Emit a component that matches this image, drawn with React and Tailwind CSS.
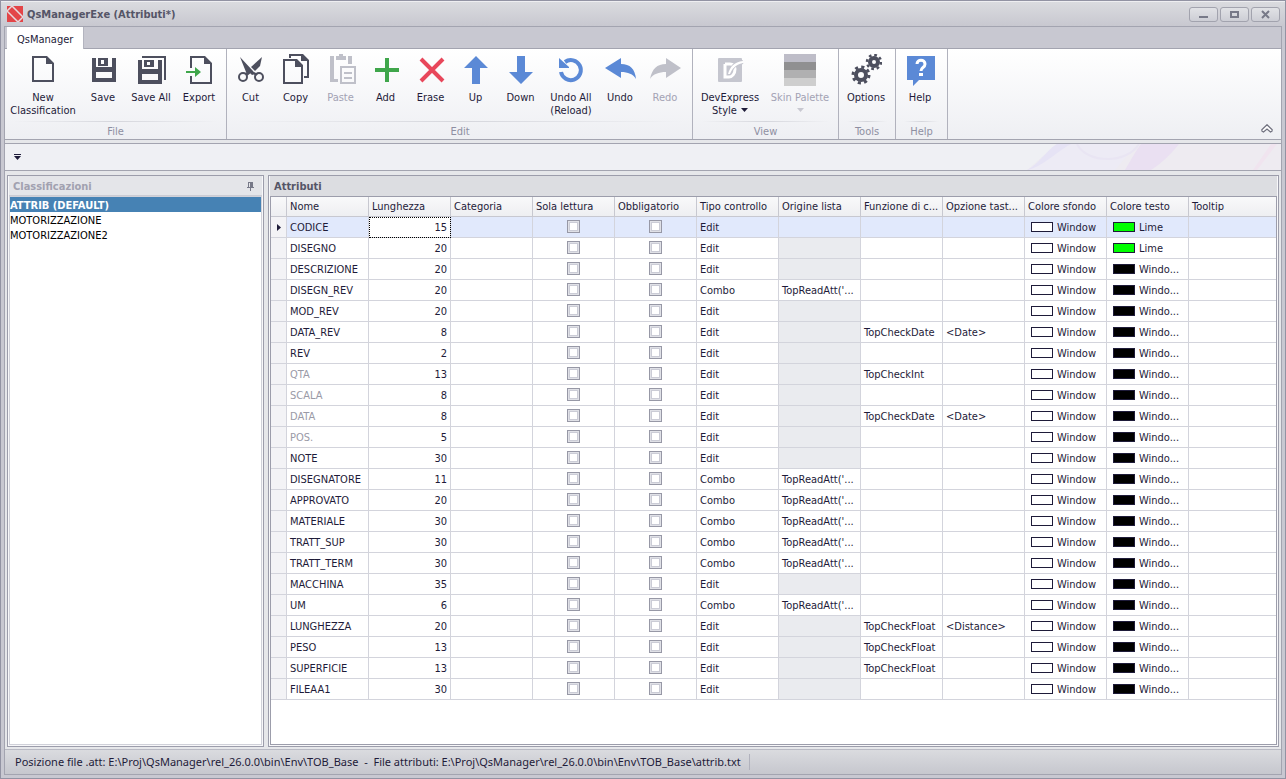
import { useState } from "react";

const DARK = "#4d4f5e";

const NewIcon = () => (
  <svg className="w-8 h-8" viewBox="0 0 32 32" fill={DARK} fillRule="evenodd">
    <path d="M5 2h15l7 7v19H5zM7 4v22h18V10h-6V4z" />
  </svg>
);

const SaveIcon = () => (
  <svg className="w-8 h-8" viewBox="0 0 32 32" fill={DARK} fillRule="evenodd">
    <path d="M5 4h4v9h16V4h4v24H5zM9 18v6h16v-6z" />
    <path d="M11 4h10v8H11zM14 6v4h3V6z" />
  </svg>
);

const SaveAllIcon = () => (
  <svg className="w-8 h-8" viewBox="0 0 32 32" fill={DARK} fillRule="evenodd">
    <path d="M3 6h4v9h16V6h4v24H3zM7 20v6h16v-6z" />
    <path d="M9 6h10v7H9zM12 8v3h3V8z" />
    <path d="M7 2h24v24h-2V4H7z" />
  </svg>
);

const ExportIcon = () => (
  <svg className="w-8 h-8" viewBox="0 0 32 32" fill={DARK}>
    <path d="M7 2h15l7 7v21H7v-8h2v6h18V10h-6V4H9v10H7z" />
    <path d="M3 17h9v-4l6 5-6 5v-4H3z" fill="#3fa64b" />
  </svg>
);

const CutIcon = () => (
  <svg className="w-8 h-8" viewBox="0 0 32 32" fill={DARK}>
    <path d="M5 3l13 14 2 3-3 1-2-2-4-1z" />
    <path d="M27 3l-2 9-5 5-4-4z" />
    <circle cx="8" cy="23" r="4" fill="none" stroke={DARK} strokeWidth="2" />
    <circle cx="24" cy="23" r="4" fill="none" stroke={DARK} strokeWidth="2" />
    <path d="M10 19l5-3 2 2-5 4zM19 18l4 2-2 2-4-3z" />
  </svg>
);

const CopyIcon = () => (
  <svg className="w-8 h-8" viewBox="0 0 32 32" fill={DARK} fillRule="evenodd">
    <path d="M3 5h14l6 6v19H3zM5 7v21h16V13h-6V7z" />
    <path d="M9 0h14l6 6v18h-5v-2h3V7h-6V2H11v2H9z" />
  </svg>
);

const PasteIcon = () => (
  <svg className="w-8 h-8" viewBox="0 0 32 32" fill="#bfc0c9" fillRule="evenodd">
    <path d="M5 2h4v23h4v3H5zM23 2h4v8h-4zM11 2h3V0h4v2h3v4H11z" />
    <path d="M15 12h16v18H15zM17 14v14h12V14z" />
    <path d="M19 18h8v2h-8zM19 23h8v2h-8z" />
  </svg>
);

const AddIcon = () => (
  <svg className="w-8 h-8" viewBox="0 0 32 32" fill="#3fa64b">
    <path d="M15 4h4v10h10v4H19v10h-4V18H5v-4h10z" />
  </svg>
);

const EraseIcon = () => (
  <svg className="w-8 h-8" viewBox="0 0 32 32" fill="none" stroke="#e8475b" strokeWidth="4">
    <path d="M6 5l22 22M28 5L6 27" />
  </svg>
);

const UpIcon = () => (
  <svg className="w-8 h-8" viewBox="0 0 32 32" fill="#5b89d6">
    <path d="M16 2l12 12h-8v16h-8V14H4z" />
  </svg>
);

const DownIcon = () => (
  <svg className="w-8 h-8" viewBox="0 0 32 32" fill="#5b89d6">
    <path d="M12 2h8v16h8L16 30 4 18h8z" />
  </svg>
);

const UndoAllIcon = () => (
  <svg className="w-8 h-8" viewBox="0 0 32 32">
    <path d="M6 18a10 10 0 1 0 4-10" fill="none" stroke="#5b89d6" strokeWidth="4" />
    <path d="M4 4l10 9v1H4z" fill="#5b89d6" />
  </svg>
);

const UndoIcon = () => (
  <svg className="w-8 h-8" viewBox="0 0 32 32" fill="#5b89d6">
    <path d="M1 14L17 4v6c9 0 14 5 15 15C29 20 24 18 17 18v6z" />
  </svg>
);

const RedoIcon = () => (
  <svg className="w-8 h-8" viewBox="0 0 32 32" fill="#bfc0c9">
    <path d="M32 14L17 4v6C8 10 3 15 1 25c3-5 9-7 16-7v6z" />
  </svg>
);

const StyleIcon = () => (
  <svg className="w-8 h-8" viewBox="0 0 32 32">
    <rect x="4" y="4" width="24" height="24" rx="1" fill="#c5c6cf" />
    <path d="M11 10h5c3 0 5 2 5 5 0 5-3 8-6 8h-4V10" fill="none" stroke="#fff" strokeWidth="3" />
    <path d="M15 20C17 13 21 9 29 8" fill="none" stroke="#c5c6cf" strokeWidth="4" />
    <path d="M14 20C16 13 20 8 29 7v2C21 11 18 15 16 20z" fill="#fff" />
  </svg>
);

const PaletteIcon = () => (
  <svg className="w-8 h-8" viewBox="0 0 32 32">
    <path d="M0 0h32v8H0z" fill="#bebdc8" />
    <path d="M0 8h32v8H0z" fill="#909091" />
    <path d="M0 16h32v8H0z" fill="#b0b0b1" />
    <path d="M0 24h32v8H0z" fill="#cecece" />
  </svg>
);

const OptionsIcon = () => (
  <svg className="w-8 h-8" viewBox="0 0 32 32" fill="none" stroke={DARK}>
    <circle cx="11" cy="21" r="5" strokeWidth="4" />
    <circle cx="11" cy="21" r="8" strokeWidth="3" strokeDasharray="3.100 3.180" />
    <circle cx="24" cy="8" r="4" strokeWidth="4" />
    <circle cx="24" cy="8" r="7" strokeWidth="2.500" strokeDasharray="2.700 2.800" />
  </svg>
);

const HelpIcon = () => (
  <svg className="w-8 h-8" viewBox="0 0 32 32">
    <path d="M3 2h28v24H15l-6 6v-6H3z" fill="#5b89d6" />
    <path d="M13 10c0-5 8-5 8 0 0 4-4 3-4 7" fill="none" stroke="#fff" strokeWidth="3" />
    <path d="M15 19h4v3h-4z" fill="#fff" />
  </svg>
);

const ribbon = [
  {
    title: "File",
    className: "w-[222px]",
    items: [
      { label: "New", label2: "Classification", icon: NewIcon, width: "w-[76px]" },
      { label: "Save", icon: SaveIcon, width: "w-11" },
      { label: "Save All", icon: SaveAllIcon, width: "w-[52px]" },
      { label: "Export", icon: ExportIcon, width: "w-11" },
    ],
  },
  {
    title: "Edit",
    className: "w-[466px] pl-px",
    items: [
      { label: "Cut", icon: CutIcon, width: "w-[45px]" },
      { label: "Copy", icon: CopyIcon, width: "w-[45px]" },
      { label: "Paste", icon: PasteIcon, width: "w-[45px]", disabled: true },
      { label: "Add", icon: AddIcon, width: "w-[45px]" },
      { label: "Erase", icon: EraseIcon, width: "w-[45px]" },
      { label: "Up", icon: UpIcon, width: "w-[45px]" },
      { label: "Down", icon: DownIcon, width: "w-[45px]" },
      { label: "Undo All", label2: "(Reload)", icon: UndoAllIcon, width: "w-14" },
      { label: "Undo", icon: UndoIcon, width: "w-[42px]" },
      { label: "Redo", icon: RedoIcon, width: "w-12", disabled: true },
    ],
  },
  {
    title: "View",
    className: "w-[146px]",
    items: [
      { label: "DevExpress", label2: "Style", icon: StyleIcon, width: "w-[74px]", arrow: true },
      { label: "Skin Palette", icon: PaletteIcon, width: "w-[66px]", disabled: true, arrow: true },
    ],
  },
  {
    title: "Tools",
    className: "w-[57px]",
    items: [{ label: "Options", icon: OptionsIcon, width: "w-[54px]" }],
  },
  {
    title: "Help",
    className: "w-[52px]",
    items: [{ label: "Help", icon: HelpIcon, width: "w-12" }],
  },
];

const classifications = ["ATTRIB (DEFAULT)", "MOTORIZZAZIONE", "MOTORIZZAZIONE2"];

const columns = [
  "Nome",
  "Lunghezza",
  "Categoria",
  "Sola lettura",
  "Obbligatorio",
  "Tipo controllo",
  "Origine lista",
  "Funzione di c...",
  "Opzione tast...",
  "Colore sfondo",
  "Colore testo",
  "Tooltip",
];

const LIST = "TopReadAtt('...";

const rows = [
  { name: "CODICE", length: 15, lime: true },
  { name: "DISEGNO", length: 20, lime: true },
  { name: "DESCRIZIONE", length: 20 },
  { name: "DISEGN_REV", length: 20, combo: true },
  { name: "MOD_REV", length: 20 },
  { name: "DATA_REV", length: 8, check: "TopCheckDate", option: "<Date>" },
  { name: "REV", length: 2 },
  { name: "QTA", length: 13, check: "TopCheckInt", dim: true },
  { name: "SCALA", length: 8, dim: true },
  { name: "DATA", length: 8, check: "TopCheckDate", option: "<Date>", dim: true },
  { name: "POS.", length: 5, dim: true },
  { name: "NOTE", length: 30 },
  { name: "DISEGNATORE", length: 11, combo: true },
  { name: "APPROVATO", length: 20, combo: true },
  { name: "MATERIALE", length: 30, combo: true },
  { name: "TRATT_SUP", length: 30, combo: true },
  { name: "TRATT_TERM", length: 30, combo: true },
  { name: "MACCHINA", length: 35 },
  { name: "UM", length: 6, combo: true },
  { name: "LUNGHEZZA", length: 20, check: "TopCheckFloat", option: "<Distance>" },
  { name: "PESO", length: 13, check: "TopCheckFloat" },
  { name: "SUPERFICIE", length: 13, check: "TopCheckFloat" },
  { name: "FILEAA1", length: 30 },
];

const Arrow = ({ disabled }) => (
  <svg
    className={`inline-block w-[7px] h-1 mb-0.5 ${disabled ? "text-[#c8c8d1]" : "ml-1"}`}
    viewBox="0 0 7 4"
    fill="currentColor"
  >
    <path d="M0 0h7L3.500 4z" />
  </svg>
);

const RibbonButton = ({ item }) => {
  const Icon = item.icon;
  return (
    <button
      type="button"
      disabled={item.disabled}
      className={`${item.width} shrink-0 flex flex-col items-center pt-[5px] text-[#1e1b39] disabled:text-[#a3a2b4]`}
    >
      <Icon />
      <span className="mt-[5px] leading-[13px] whitespace-nowrap">
        {item.label}
        {(item.label2 || item.arrow) && <br />}
        {item.label2}
        {item.arrow && <Arrow disabled={item.disabled} />}
      </span>
    </button>
  );
};

const RibbonGroup = ({ group }) => (
  <section className={`${group.className} shrink-0 flex flex-col border-r border-[#b1b2bd]`}>
    <div className="flex shrink-0 h-[72px]">
      {group.items.map((item) => (
        <RibbonButton key={item.label} item={item} />
      ))}
    </div>
    <div className="shrink-0 h-px mx-2 bg-gradient-to-r from-transparent via-[#d5d6dc] to-transparent" />
    <h2 className="leading-5 text-center text-[#8e8fa2]">{group.title}</h2>
  </section>
);

const WindowButton = ({ label, children }) => (
  <button
    type="button"
    aria-label={label}
    className="w-[29px] h-[15px] flex items-center justify-center rounded-[3px] border border-[#a2a3ae] bg-gradient-to-b from-[#e1e2e6] to-[#cdced5]"
  >
    <svg className="w-[11px] h-[9px]" viewBox="0 0 11 9" fill="none" stroke="#777988" strokeWidth="2">
      {children}
    </svg>
  </button>
);

const Check = ({ label }) => (
  <input
    type="checkbox"
    aria-label={label}
    className="block mx-auto w-[13px] h-[13px] appearance-none border border-[#9798a6] bg-white checked:bg-[#4682b4] shadow-[inset_0_0_0_1px_#e0e1e7,inset_0_0_0_2px_#cbccd6]"
  />
);

const Swatch = ({ color, name }) => (
  <div className="flex items-center pl-[3px]">
    <span className={`${color} w-[22px] h-[10px] mb-px shrink-0 border border-[#1e1b39]`} />
    <span className="ml-1">{name}</span>
  </div>
);

const AttributeTable = () => (
  <table className="w-full table-fixed border-separate border-spacing-0">
    <colgroup>
      <col className="w-4" />
      {columns.map((c) => (
        <col key={c} className={c === "Tooltip" ? "" : "w-[82px]"} />
      ))}
    </colgroup>
    <thead>
      <tr className="h-5 bg-gradient-to-b from-[#f9f9fa] to-[#edeef1]">
        <th className="p-0 border-r border-b border-[#c7c8d0]" aria-label="Riga" />
        {columns.map((c) => (
          <th
            key={c}
            className="pl-[3px] pr-0 py-0 text-left font-normal whitespace-nowrap border-r last:border-r-0 border-b border-[#c7c8d0]"
          >
            {c}
          </th>
        ))}
      </tr>
    </thead>
    <tbody>
      {rows.map((row, i) => (
        <tr
          key={row.name}
          className={`h-[21px] *:border-r *:last:border-r-0 *:border-b *:border-[#d3d4dc] *:px-[3px] *:pt-px *:pb-0 *:whitespace-nowrap ${i === 0 ? "bg-[#e1e9fc]" : "bg-white"}`}
        >
          <td className="bg-[#f3f3f6]">
            {i === 0 && (
              <svg className="w-1 h-[7px] ml-[3px]" viewBox="0 0 4 7" fill="#1e1b39">
                <path d="M0 0l4 3.500L0 7z" />
              </svg>
            )}
          </td>
          <td className={row.dim ? "text-[#9a9aa6]" : ""}>{row.name}</td>
          <td className={i === 0 ? "text-right bg-white outline-1 outline-dotted outline-black -outline-offset-1" : "text-right"}>
            {row.length}
          </td>
          <td />
          <td className="pt-0! pb-px! pr-1!"><Check label={`${row.name} sola lettura`} /></td>
          <td className="pt-0! pb-px! pr-1!"><Check label={`${row.name} obbligatorio`} /></td>
          <td>{row.combo ? "Combo" : "Edit"}</td>
          <td className={!row.combo && i > 0 ? "bg-[#eaebef]" : ""}>{row.combo && LIST}</td>
          <td>{row.check}</td>
          <td>{row.option}</td>
          <td><Swatch color="bg-white" name="Window" /></td>
          <td>
            <Swatch color={row.lime ? "bg-[#00ff00]" : "bg-black"} name={row.lime ? "Lime" : "Windo..."} />
          </td>
          <td />
        </tr>
      ))}
    </tbody>
  </table>
);

export default function App() {
  const [selected, setSelected] = useState(0);

  return (
    <div className="min-h-screen flex flex-col px-[3px] pb-[3px] border border-[#9293a3] bg-[#c8c8d1] text-[11px] leading-[13px] text-[#1e1b39] font-['DejaVu_Sans_Condensed','DejaVu_Sans',sans-serif]">
      <header className="h-[25px] -mx-[3px] pl-1.5 pr-[5px] flex items-center border-t border-[#eeeef1] bg-gradient-to-b from-[#dadbdf] to-[#c8c8d0]">
        <svg className="w-4 h-4" viewBox="0 0 16 16">
          <path d="M0 0h16v16H0z" fill="#e34548" />
          <path d="M0 5l11 11M5 0l11 11M0 5l5-5M11 16l5-5" stroke="#e5dcdf" strokeWidth="1.500" />
        </svg>
        <h1 className="ml-1 flex-1 font-bold text-[#555567]">QsManagerExe (Attributi*)</h1>
        <div className="flex gap-0.5">
          <WindowButton label="Riduci a icona"><path d="M1 7h9" /></WindowButton>
          <WindowButton label="Ingrandisci"><path d="M2 2h7v5H2z" /></WindowButton>
          <WindowButton label="Chiudi"><path d="M2 1l7 7M9 1L2 8" /></WindowButton>
        </div>
      </header>

      <div className="flex-1 flex flex-col border border-[#a3a4b0] bg-[#e6e7ea]">
        <nav className="h-[22px] flex items-end pl-0.5 border-b border-[#a3a4b0] bg-[#c8c8d1]">
          <button type="button" className="h-[22px] px-2.5 pt-0.5 -mb-px border-r border-[#b3b4bf] bg-white">
            QsManager
          </button>
        </nav>

        <div className="h-[91px] flex border-b border-[#a3a4b0] bg-gradient-to-b from-white to-[#eeeff3]">
          {ribbon.map((group) => (
            <RibbonGroup key={group.title} group={group} />
          ))}
          <button type="button" aria-label="Comprimi" className="ml-auto mr-2 mb-1.5 self-end">
            <svg className="w-3 h-[9px]" viewBox="0 0 12 9" fill="#fff" stroke="#70717f" strokeWidth="1.200">
              <path d="M6 .7l5.200 5-.2 1.500-1.500.8L6 5 2.500 8 1 7.200.8 5.700z" />
            </svg>
          </button>
        </div>

        <div className="relative h-7 mt-[3px] flex items-center border-y border-[#a3a4b0] bg-[#eff0f4]">
          <svg className="absolute right-0 top-0 w-[270px] h-[26px]" viewBox="0 0 270 26">
            <path d="M46 0h224v26H16z" fill="#eeebf1" />
            <path d="M16 26C28 20 36 6 46 0h80L104 26z" fill="#edebf5" />
            <path d="M16 26C28 20 36 6 46 0h14C48 6 30 24 16 26z" fill="#e6e3f5" />
            <path d="M66 0c10 20 50 20 62 0" fill="none" stroke="#e9e5f3" strokeWidth="2" />
            <path d="M114 26c6-10 10-18 16-26h38c-8 10-18 20-28 26z" fill="#eae0f2" />
            <path d="M242 26L260 0h6l-20 26z" fill="#f0e4ef" />
          </svg>
          <button type="button" aria-label="Personalizza" className="ml-[9px]">
            <svg className="w-[7px] h-1.5" viewBox="0 0 7 6" fill="#1e1b39">
              <path d="M0 0h7v1H0zM0 2h7L3.500 6z" />
            </svg>
          </button>
        </div>

        <main className="flex-1 flex gap-1 pt-1 pb-0.5 px-0.5">
          <aside className="w-[257px] shrink-0 flex flex-col border border-[#9c9dab] bg-[#f8f8fa] p-px pt-0">
            <div className="h-5 pl-1 pr-2 pt-px flex items-center justify-between bg-[#e4e5e9] border-b border-[#cbccd4]">
              <h2 className="font-bold text-[#a1a1b0]">Classificazioni</h2>
              <svg className="w-[7px] h-[9px]" viewBox="0 0 7 9" fill="#777988" fillRule="evenodd">
                <path d="M1 0h5v5h1v1H4v3H3V6H0V5h1zM2 1v4h1V1z" />
              </svg>
            </div>
            <ul className="flex-1 border border-[#d0d1d9] bg-white text-black">
              {classifications.map((name, i) => (
                <li key={name}>
                  <button
                    type="button"
                    onClick={() => setSelected(i)}
                    className={`block w-full h-[15px] pt-0.5 text-left ${i === selected ? "bg-[#4682b4] text-white font-bold" : ""}`}
                  >
                    {name}
                  </button>
                </li>
              ))}
            </ul>
          </aside>

          <section className="flex-1 min-w-0 flex flex-col border border-[#9c9dab] bg-[#f8f8fa] p-px pt-0">
            <h2 className="h-5 pl-1 pt-px leading-5 font-bold text-[#555567] bg-[#dcdde1]">Attributi</h2>
            <div className="flex-1 border border-[#9c9dab] bg-white">
              <AttributeTable />
            </div>
          </section>
        </main>

        <footer className="h-[25px] flex items-center pl-2.5 border-t border-[#b9bac4] bg-gradient-to-b from-[#dadbdf] to-[#c6c7ce] font-['Noto_Sans',sans-serif]">
          <span className="pr-2 border-r border-[#b1b2bd] leading-4 whitespace-pre">
            {"Posizione file .att: E:\\Proj\\QsManager\\rel_26.0.0\\bin\\Env\\TOB_Base  -  File attributi: E:\\Proj\\QsManager\\rel_26.0.0\\bin\\Env\\TOB_Base\\attrib.txt"}
          </span>
        </footer>
      </div>
    </div>
  );
}
